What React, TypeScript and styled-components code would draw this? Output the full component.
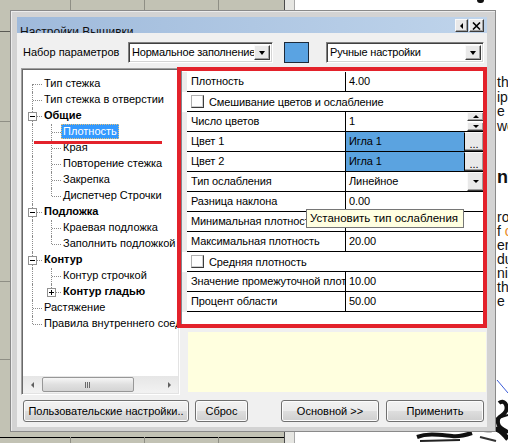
import React from "react";
import styled, { createGlobalStyle, css } from "styled-components";

const FONT = `"Liberation Sans", Arial, "Noto Sans", sans-serif`;
const DOT = "#8c8c8c";
const RED = "#e3222b";
const LINE = "#8f8f85";

const GlobalStyle = createGlobalStyle`
  html, body { margin: 0; padding: 0; background: #fff; }
  body { font-family: ${FONT}; font-size: 11px; color: #000; }
  * { box-sizing: border-box; }
`;

const raised = css`
  background: #e9e9e9;
  border: 1px solid;
  border-color: #fafafa #3c3c3c #3c3c3c #fafafa;
  box-shadow: inset -1px -1px #a0a0a0;
`;

const Desktop = styled.div`
  position: relative;
  display: flex;
  width: 508px;
  height: 443px;
  overflow: hidden;
`;

const GridPanel = styled.div`
  flex: none;
  width: 284px;
  background-color: #c2c2b4;
  background-image:
    linear-gradient(to right, transparent 70px, ${LINE} 70px 71px, transparent 71px 144px, ${LINE} 144px 145px, transparent 145px 218px, ${LINE} 218px 219px, transparent 219px),
    linear-gradient(to right, transparent 70px, ${LINE} 70px 71px, transparent 71px 144px, ${LINE} 144px 145px, transparent 145px 218px, ${LINE} 218px 219px, transparent 219px),
    linear-gradient(to bottom, transparent 31px, #5a5a54 31px 32px, transparent 32px 121px, ${LINE} 121px 122px, transparent 122px 281px, ${LINE} 281px 282px, transparent 282px 359px, ${LINE} 359px 360px, transparent 360px 437px, #000 437px 438px, transparent 438px);
  background-size: 100% 32px, 100% 6px, 100% 100%;
  background-position: 0 0, 0 100%, 0 0;
  background-repeat: no-repeat;
`;

const Splitter = styled.div`
  flex: none;
  width: 11px;
  background: #e6e6e2;
  border-left: 1px solid #4a4a4a;
  border-right: 1px solid #a8a8a8;
`;

const DocPage = styled.div`
  flex: 1;
  display: flex;
  flex-direction: column;
  background: #fff;
  overflow: hidden;
  color: #111;
`;

const TopMark = styled.div`
  flex: none;
  margin-left: 182px;
  width: 7px;
  height: 3px;
  background: #111;
  border-radius: 0 0 3px 3px;
`;

const DocText = styled.div`
  padding-left: 202px;
  white-space: nowrap;
`;

const DocPara = styled.div<{ $top: number; $lh: number }>`
  margin-top: ${(p) => p.$top}px;
  font-size: 14px;
  line-height: ${(p) => p.$lh}px;
`;

const DocHeading = styled.div`
  margin-top: 34px;
  font-size: 18px;
  font-weight: 700;
  line-height: 20px;
`;

const Orange = styled.span`
  color: #e8891c;
`;

const Illustration = styled.svg`
  flex: none;
  margin-top: auto;
  margin-left: 105px;
  display: block;
`;

const Dialog = styled.div`
  position: absolute;
  left: 10px;
  top: 10px;
  width: 486px;
  height: 422px;
  display: flex;
  flex-direction: column;
  padding: 6px 8px 4px 6px;
  background: #d3d3d3;
  border: 1px solid #8a8a8a;
  box-shadow: inset 1px 1px #ececec;
`;

const TitleBar = styled.div`
  flex: none;
  height: 16px;
  display: flex;
  align-items: flex-start;
  overflow: hidden;
  padding-left: 3px;
  background: linear-gradient(to right, #9fbadb, #bfd4eb);
`;

const TitleText = styled.span`
  padding-top: 8px;
  font-size: 12px;
  line-height: 15px;
  color: #101010;
  white-space: nowrap;
`;

const TitleButtons = styled.div`
  margin-left: auto;
  margin-right: 3px;
  margin-top: 2px;
  display: flex;
  gap: 1px;
`;

const TitleButton = styled.span<{ $w: number }>`
  ${raised};
  width: ${(p) => p.$w}px;
  height: 13px;
  display: flex;
  align-items: center;
  justify-content: center;
`;

const Body = styled.div`
  flex: 1;
  display: flex;
  flex-direction: column;
  background: #f0f0f0;
`;

const TopRow = styled.div`
  flex: none;
  margin-top: 9px;
  height: 21px;
  display: flex;
  align-items: stretch;
  padding: 0 3px 0 6px;
`;

const ParamLabel = styled.span`
  flex: none;
  width: 105px;
  line-height: 21px;
  white-space: nowrap;
`;

const Combo = styled.div<{ $w: number; $gap?: number }>`
  flex: none;
  width: ${(p) => p.$w}px;
  margin-left: ${(p) => p.$gap ?? 0}px;
  display: flex;
  align-items: stretch;
  background: #fff;
  border: 1px solid;
  border-color: #808080 #fff #fff #808080;
  box-shadow: inset 1px 1px #404040, inset -1px -1px #d4d4d4;
  padding: 2px;
`;

const ComboText = styled.span`
  flex: 1;
  min-width: 0;
  overflow: hidden;
  white-space: nowrap;
  padding-left: 1px;
  line-height: 15px;
  letter-spacing: -0.2px;
`;

const DropBtn = styled.span<{ $w?: number }>`
  ${raised};
  flex: none;
  width: ${(p) => p.$w ?? 16}px;
  display: flex;
  align-items: center;
  justify-content: center;
`;

const Arrow = styled.span<{ $dir: "up" | "down" | "left" | "right"; $half?: number; $len?: number; $color?: string }>`
  display: block;
  width: 0;
  height: 0;
  border-style: solid;
  ${({ $dir, $half = 3.5, $len = 4, $color = "#000" }) => {
    switch ($dir) {
      case "down":
        return `border-width: ${$len}px ${$half}px 0 ${$half}px; border-color: ${$color} transparent transparent transparent;`;
      case "up":
        return `border-width: 0 ${$half}px ${$len}px ${$half}px; border-color: transparent transparent ${$color} transparent;`;
      case "left":
        return `border-width: ${$half}px ${$len}px ${$half}px 0; border-color: transparent ${$color} transparent transparent;`;
      default:
        return `border-width: ${$half}px 0 ${$half}px ${$len}px; border-color: transparent transparent transparent ${$color};`;
    }
  }}
`;

const Swatch = styled.span`
  flex: none;
  width: 25px;
  margin-left: 11px;
  background: #5aa3e2;
  border: 1px solid #1c2a3a;
`;

const Main = styled.div`
  flex: none;
  margin-top: 5px;
  height: 327px;
  display: flex;
`;

const Tree = styled.div`
  flex: none;
  width: 159px;
  margin-left: 4px;
  display: flex;
  flex-direction: column;
  background: #fff;
  border: 1px solid;
  border-color: #a0a0a0 #fff #fff #a0a0a0;
  box-shadow: inset 1px 1px #696969, inset -1px -1px #e3e3e3;
  padding: 1px;
`;

const TreeRows = styled.div`
  flex: 1;
  overflow: hidden;
  padding-top: 6px;
`;

const TreeRow = styled.div`
  display: flex;
  height: 16px;
`;

const Guide = styled.span<{ $up?: boolean; $down?: boolean; $arm?: boolean }>`
  position: relative;
  flex: none;
  width: 19px;
  &::before {
    content: "";
    position: absolute;
    left: 9px;
    top: ${(p) => (p.$up ? 0 : 8)}px;
    bottom: ${(p) => (p.$down ? 0 : 8)}px;
    border-left: 1px dotted ${DOT};
    display: ${(p) => (p.$up || p.$down ? "block" : "none")};
  }
  &::after {
    content: "";
    position: absolute;
    left: 10px;
    right: 0;
    top: 8px;
    border-top: 1px dotted ${DOT};
    display: ${(p) => (p.$arm ? "block" : "none")};
  }
`;

const Toggle = styled.span<{ $open: boolean }>`
  position: absolute;
  z-index: 1;
  left: 5px;
  top: 4px;
  width: 9px;
  height: 9px;
  border: 1px solid #919191;
  background-color: #fff;
  background-image: linear-gradient(#000, #000) ${(p) => (p.$open ? "" : ", linear-gradient(#000, #000)")};
  background-repeat: no-repeat;
  background-size: 5px 1px ${(p) => (p.$open ? "" : ", 1px 5px")};
  background-position: 1px 3px ${(p) => (p.$open ? "" : ", 3px 1px")};
`;

const TreeLabel = styled.span<{ $bold?: boolean; $selected?: boolean }>`
  height: 15px;
  padding: 0 1px;
  line-height: 13px;
  white-space: nowrap;
  font-weight: ${(p) => (p.$bold ? 700 : 400)};
  border: 1px ${(p) => (p.$selected ? "dotted #e6c27a" : "solid transparent")};
  background: ${(p) => (p.$selected ? "#3399ff" : "transparent")};
  color: ${(p) => (p.$selected ? "#fff" : "#000")};
`;

const HScroll = styled.div`
  flex: none;
  height: 17px;
  display: flex;
  align-items: center;
  background: linear-gradient(to bottom, #e6e6e6, #f2f2f2);
`;

const ScrollArrow = styled.span`
  flex: none;
  width: 18px;
  height: 17px;
  display: flex;
  align-items: center;
  justify-content: center;
`;

const ScrollTrack = styled.div`
  flex: 1;
  display: flex;
  align-items: center;
`;

const Thumb = styled.span`
  width: 92px;
  height: 15px;
  margin-left: 1px;
  border: 1px solid #979797;
  border-radius: 2px;
  background: linear-gradient(to bottom, #f6f6f6, #e0e0e0 50%, #d4d4d4);
  display: flex;
  align-items: center;
  justify-content: center;
`;

const Grip = styled.span`
  width: 6px;
  height: 6px;
  background: repeating-linear-gradient(to right, #6a6a6a 0 1px, transparent 1px 2px);
`;

const PropColumn = styled.div`
  flex: 1;
  display: flex;
  flex-direction: column;
  margin-left: 1px;
  padding-right: 1px;
`;

const PropGrid = styled.div`
  flex: none;
  margin-top: 2px;
  margin-right: 1px;
  height: 255px;
  padding-top: 1px;
  background: #fff;
  border: 1px solid #828790;
  letter-spacing: -0.1px;
`;

const PropRow = styled.div`
  display: flex;
  height: 20px;
`;

const Gutter = styled.span<{ $plain?: boolean }>`
  flex: none;
  width: 5px;
  background: ${(p) => (p.$plain ? "#fff" : "#ececec")};
`;

const LabelCell = styled.span`
  flex: none;
  width: 159px;
  padding-left: 4px;
  line-height: 19px;
  white-space: nowrap;
  overflow: hidden;
  border-right: 1px solid #000;
  border-bottom: 1px solid #000;
  background: #fff;
`;

const ValueCell = styled.span<{ $hi?: boolean }>`
  flex: 1;
  min-width: 0;
  display: flex;
  border-bottom: 1px solid #000;
  background: ${(p) => (p.$hi ? "#5ba3e0" : "#fff")};
`;

const ValueText = styled.span`
  flex: 1;
  min-width: 0;
  padding-left: 3px;
  line-height: 19px;
  white-space: nowrap;
  overflow: hidden;
`;

const CheckCell = styled.span`
  flex: 1;
  display: flex;
  align-items: center;
  gap: 5px;
  padding-left: 4px;
  border-bottom: 1px solid #000;
  background: #fff;
  white-space: nowrap;
`;

const CheckBox = styled.span`
  flex: none;
  width: 13px;
  height: 13px;
  background: #fff;
  border: 1px solid;
  border-color: #b0b0b0 #3c3c3c #3c3c3c #b0b0b0;
  box-shadow: inset -1px -1px #d0d0d0;
`;

const EditBtn = styled.span`
  ${raised};
  flex: none;
  width: 20px;
  border-left-color: #000;
  display: flex;
  align-items: flex-end;
  justify-content: center;
  padding-bottom: 1px;
  line-height: 10px;
  font-size: 11px;
`;

const Spin = styled.span`
  flex: none;
  width: 17px;
  display: flex;
  flex-direction: column;
  gap: 1px;
`;

const SpinHalf = styled.span`
  ${raised};
  flex: 1;
  display: flex;
  align-items: center;
  justify-content: center;
`;

const Description = styled.div`
  flex: none;
  margin-top: 7px;
  margin-left: 7px;
  height: 60px;
  background: #ffffdf;
`;

const ButtonRow = styled.div`
  flex: none;
  margin-top: 5px;
  height: 22px;
  display: flex;
  padding: 0 3px 0 6px;
`;

const Button = styled.button<{ $w: number; $gap?: number; $push?: boolean }>`
  flex: none;
  width: ${(p) => p.$w}px;
  margin-left: ${(p) => (p.$push ? "auto" : `${p.$gap ?? 0}px`)};
  height: 22px;
  padding: 0;
  font-family: ${FONT};
  font-size: 11px;
  color: #000;
  white-space: nowrap;
  border: 1px solid #707070;
  border-radius: 3px;
  background: linear-gradient(to bottom, #f2f2f2 0%, #ebebeb 48%, #dddddd 52%, #cfcfcf 100%);
  box-shadow: inset 0 0 0 1px #fcfcfc;
`;

const Tooltip = styled.div`
  position: absolute;
  left: 306px;
  top: 209px;
  width: 158px;
  height: 19px;
  padding-left: 3px;
  background: #ffffe1;
  border: 1px solid #767676;
  line-height: 17px;
  font-size: 11.5px;
  white-space: nowrap;
`;

const MarkBox = styled.div`
  position: absolute;
  left: 177px;
  top: 67px;
  width: 310px;
  height: 261px;
  border: 4px solid ${RED};
  pointer-events: none;
`;

const MarkLine = styled.div`
  position: absolute;
  left: 34px;
  top: 141px;
  width: 128px;
  height: 3px;
  background: ${RED};
`;

type TreeNode = {
  label: string;
  level: 0 | 1;
  bold?: boolean;
  toggle?: "open" | "closed";
  selected?: boolean;
  first?: boolean;
  last?: boolean;
};

const treeNodes: TreeNode[] = [
  { label: "Тип стежка", level: 0, first: true },
  { label: "Тип стежка в отверстии", level: 0 },
  { label: "Общие", level: 0, bold: true, toggle: "open" },
  { label: "Плотность", level: 1, selected: true },
  { label: "Края", level: 1 },
  { label: "Повторение стежка", level: 1 },
  { label: "Закрепка", level: 1 },
  { label: "Диспетчер Строчки", level: 1, last: true },
  { label: "Подложка", level: 0, bold: true, toggle: "open" },
  { label: "Краевая подложка", level: 1 },
  { label: "Заполнить подложкой", level: 1, last: true },
  { label: "Контур", level: 0, bold: true, toggle: "open" },
  { label: "Контур строчкой", level: 1 },
  { label: "Контур гладью", level: 1, bold: true, toggle: "closed", last: true },
  { label: "Растяжение", level: 0 },
  { label: "Правила внутреннего соединения", level: 0, last: true },
];

type PropItem =
  | { kind: "field"; label: string; value: string; editor?: "spin" | "dots" | "drop"; hi?: boolean }
  | { kind: "check"; label: string };

const props: PropItem[] = [
  { kind: "field", label: "Плотность", value: "4.00" },
  { kind: "check", label: "Смешивание цветов и ослабление" },
  { kind: "field", label: "Число цветов", value: "1", editor: "spin" },
  { kind: "field", label: "Цвет 1", value: "Игла 1", editor: "dots", hi: true },
  { kind: "field", label: "Цвет 2", value: "Игла 1", editor: "dots", hi: true },
  { kind: "field", label: "Тип ослабления", value: "Линейное", editor: "drop" },
  { kind: "field", label: "Разница наклона", value: "0.00" },
  { kind: "field", label: "Минимальная плотность", value: "2.00" },
  { kind: "field", label: "Максимальная плотность", value: "20.00" },
  { kind: "check", label: "Средняя плотность" },
  { kind: "field", label: "Значение промежуточной плотности", value: "10.00" },
  { kind: "field", label: "Процент области", value: "50.00" },
];

function TreeItem({ node }: { node: TreeNode }) {
  return (
    <TreeRow>
      {node.level === 1 && <Guide $up $down />}
      <Guide $up={!node.first} $down={!node.last} $arm>
        {node.toggle && <Toggle $open={node.toggle === "open"} />}
      </Guide>
      <TreeLabel $bold={node.bold} $selected={node.selected}>
        {node.label}
      </TreeLabel>
    </TreeRow>
  );
}

function PropLine({ item }: { item: PropItem }) {
  if (item.kind === "check") {
    return (
      <PropRow>
        <Gutter $plain />
        <CheckCell>
          <CheckBox />
          {item.label}
        </CheckCell>
      </PropRow>
    );
  }
  return (
    <PropRow>
      <Gutter />
      <LabelCell>{item.label}</LabelCell>
      <ValueCell $hi={item.hi}>
        <ValueText>{item.value}</ValueText>
        {item.editor === "dots" && <EditBtn>...</EditBtn>}
        {item.editor === "drop" && (
          <DropBtn $w={17}>
            <Arrow $dir="down" $half={3} $len={3} />
          </DropBtn>
        )}
        {item.editor === "spin" && (
          <Spin>
            <SpinHalf>
              <Arrow $dir="up" $half={3} $len={3} />
            </SpinHalf>
            <SpinHalf>
              <Arrow $dir="down" $half={3} $len={3} />
            </SpinHalf>
          </Spin>
        )}
      </ValueCell>
    </PropRow>
  );
}

export default function App() {
  return (
    <>
      <GlobalStyle />
      <Desktop>
        <GridPanel />
        <Splitter />
        <DocPage>
          <TopMark />
          <DocText>
            <DocPara $top={72} $lh={14.5}>
              <div>the</div>
              <div>ipt</div>
              <div>e co</div>
              <div>wor</div>
            </DocPara>
            <DocHeading>nt</DocHeading>
            <DocPara $top={23} $lh={14}>
              <div>ro</div>
              <div>
                f <Orange>c</Orange>
              </div>
              <div>er</div>
              <div>du</div>
              <div>ni</div>
              <div>th</div>
              <div>
                e <Orange>a</Orange>
              </div>
            </DocPara>
          </DocText>
          <Illustration width="108" height="68" viewBox="0 0 108 68">
            <line x1="97" y1="5" x2="108" y2="18" stroke="#3b5bd9" strokeWidth="1" />
            <path d="M99 28 C104 24 108 30 106 36 C103 42 97 40 98 48 C99 55 106 54 108 58" fill="none" stroke="#111" strokeWidth="4" />
            <path d="M95 44 L108 40" stroke="#111" strokeWidth="2" />
            <path d="M17 62 C28 58 40 60 52 61 C60 62 66 60 72 58" fill="none" stroke="#111" strokeWidth="4" />
            <path d="M20 66 L60 65" stroke="#222" strokeWidth="2" />
            <path d="M70 50 C78 54 86 56 94 54 C100 53 104 60 108 64" fill="none" stroke="#111" strokeWidth="5" />
            <path d="M80 62 L96 66" stroke="#333" strokeWidth="2" />
          </Illustration>
        </DocPage>

        <Dialog>
          <TitleBar>
            <TitleText>Настройки Вышивки</TitleText>
            <TitleButtons>
              <TitleButton $w={13}>
                <Arrow $dir="left" $half={3} $len={3} />
              </TitleButton>
              <TitleButton $w={15}>
                <svg width="9" height="8" viewBox="0 0 9 8">
                  <path d="M1 0.5 L8 7.5 M8 0.5 L1 7.5" stroke="#000" strokeWidth="1.6" />
                </svg>
              </TitleButton>
            </TitleButtons>
          </TitleBar>
          <Body>
            <TopRow>
              <ParamLabel>Набор параметров</ParamLabel>
              <Combo $w={145}>
                <ComboText>Нормальное заполнение</ComboText>
                <DropBtn>
                  <Arrow $dir="down" />
                </DropBtn>
              </Combo>
              <Swatch />
              <Combo $w={158} $gap={17}>
                <ComboText>Ручные настройки</ComboText>
                <DropBtn>
                  <Arrow $dir="down" />
                </DropBtn>
              </Combo>
            </TopRow>
            <Main>
              <Tree>
                <TreeRows>
                  {treeNodes.map((n) => (
                    <TreeItem key={n.label} node={n} />
                  ))}
                </TreeRows>
                <HScroll>
                  <ScrollArrow>
                    <Arrow $dir="left" $half={3} $len={3} $color="#606060" />
                  </ScrollArrow>
                  <ScrollTrack>
                    <Thumb>
                      <Grip />
                    </Thumb>
                  </ScrollTrack>
                  <ScrollArrow>
                    <Arrow $dir="right" $half={3} $len={3} $color="#606060" />
                  </ScrollArrow>
                </HScroll>
              </Tree>
              <PropColumn>
                <PropGrid>
                  {props.map((p) => (
                    <PropLine key={p.label} item={p} />
                  ))}
                </PropGrid>
                <Description />
              </PropColumn>
            </Main>
            <ButtonRow>
              <Button $w={166}>Пользовательские настройки..</Button>
              <Button $w={53} $gap={6}>Сброс</Button>
              <Button $w={98} $push>Основной &gt;&gt;</Button>
              <Button $w={98} $gap={7}>Применить</Button>
            </ButtonRow>
          </Body>
        </Dialog>

        <Tooltip>Установить тип ослабления</Tooltip>
        <MarkBox />
        <MarkLine />
      </Desktop>
    </>
  );
}
